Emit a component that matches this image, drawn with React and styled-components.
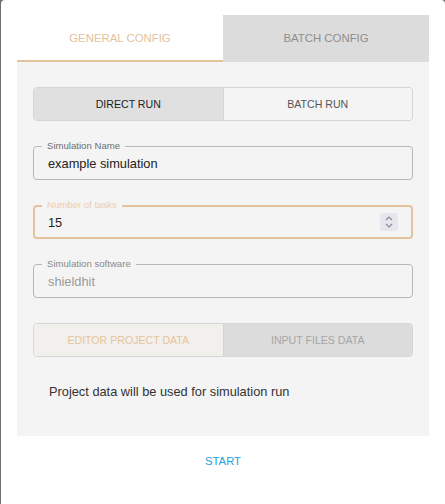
import styled, { createGlobalStyle } from 'styled-components';

const Global = createGlobalStyle`
	html, body {
		margin: 0;
		padding: 0;
		background: #6f6f6f;
		font-family: 'Liberation Sans', Arial, sans-serif;
	}
	* { box-sizing: border-box; }
`;

const Dialog = styled.div`
	margin-left: 1px;
	width: 444px;
	height: 504px;
	background: #fff;
	border-radius: 4px 4px 0 0;
	padding: 15px 16px 0 16px;
	display: flex;
	flex-direction: column;
`;

const Tabs = styled.div`
	display: flex;
	height: 47px;
`;

const Tab = styled.div`
	flex: 1;
	display: flex;
	align-items: center;
	justify-content: center;
	font-size: 11.4px;
	text-transform: uppercase;
	color: ${(p) => (p.active ? '#e3c39c' : '#8e8e8e')};
	background: ${(p) => (p.active ? '#fff' : '#dcdcdc')};
	border-bottom: 2px solid ${(p) => (p.active ? '#e3c39c' : '#dcdcdc')};
`;

const Panel = styled.div`
	background: #f4f4f4;
	height: 374px;
	padding: 25px 16px 0 16px;
	display: flex;
	flex-direction: column;
`;

const Toggle = styled.div`
	display: flex;
	height: 34px;
	border: 1px solid ${(p) => p.border || '#d4d4d4'};
	border-radius: 4px;
	overflow: hidden;
	margin-bottom: ${(p) => p.mb || 0}px;
`;

const ToggleItem = styled.div`
	flex: 1;
	display: flex;
	align-items: center;
	justify-content: center;
	font-size: 10.6px;
	text-transform: uppercase;
	color: ${(p) => p.color};
	background: ${(p) => p.bg};
	& + & {
		border-left: 1px solid ${(p) => p.sep || '#d4d4d4'};
	}
`;

const Field = styled.div`
	position: relative;
	height: 34px;
	border: ${(p) => (p.focused ? '2px solid #e3c39c' : '1px solid #b8b8b8')};
	border-radius: 4px;
	display: flex;
	align-items: center;
	padding-left: ${(p) => (p.focused ? 13 : 14)}px;
	padding-right: ${(p) => (p.focused ? 13 : 14)}px;
	margin-bottom: 25px;
	font-size: 12.8px;
	color: ${(p) => (p.disabled ? '#9a9a9a' : '#222')};
`;

const Label = styled.span`
	position: absolute;
	top: ${(p) => (p.focused ? -8 : -7)}px;
	left: ${(p) => (p.focused ? 7 : 8)}px;
	padding: 0 5px;
	background: #f4f4f4;
	font-size: 9.6px;
	line-height: 12px;
	color: ${(p) => p.color || '#6e6e6e'};
`;

const Value = styled.span`
	flex: 1;
`;

const Spinner = styled.div`
	width: 18px;
	height: 18px;
	background: #e6e6ec;
	border-radius: 2px;
	display: flex;
	align-items: center;
	justify-content: center;
`;

const Info = styled.p`
	margin: 27px 0 0 16px;
	font-size: 12.8px;
	color: #333;
`;

const Actions = styled.div`
	display: flex;
	justify-content: center;
	padding-top: 18px;
`;

const StartButton = styled.button`
	border: none;
	background: transparent;
	color: #2a9de0;
	font-family: inherit;
	font-size: 11.3px;
	text-transform: uppercase;
	cursor: pointer;
`;

export default function App() {
	return (
		<>
			<Global />
			<Dialog>
				<Tabs>
					<Tab active>General Config</Tab>
					<Tab>Batch Config</Tab>
				</Tabs>
				<Panel>
					<Toggle mb={25}>
						<ToggleItem bg='#e0e0e0' color='#222'>Direct Run</ToggleItem>
						<ToggleItem bg='#f4f4f4' color='#555'>Batch Run</ToggleItem>
					</Toggle>
					<Field>
						<Label>Simulation Name</Label>
						<Value>example simulation</Value>
					</Field>
					<Field focused>
						<Label focused color='#eacfae'>Number of tasks</Label>
						<Value>15</Value>
						<Spinner>
							<svg width='10' height='14' viewBox='0 0 10 14' fill='none' stroke='#8a8a9a' strokeWidth='1.2'>
								<path d='M2 5 L5 2 L8 5' />
								<path d='M2 9 L5 12 L8 9' />
							</svg>
						</Spinner>
					</Field>
					<Field disabled>
						<Label color='#8a8a8a'>Simulation software</Label>
						<Value>shieldhit</Value>
					</Field>
					<Toggle border='#d6d6d6'>
						<ToggleItem bg='#f2f0ec' color='#e6c49b' sep='#d6d6d6'>Editor Project Data</ToggleItem>
						<ToggleItem bg='#dcdcdc' color='#a6a6a6'>Input Files Data</ToggleItem>
					</Toggle>
					<Info>Project data will be used for simulation run</Info>
				</Panel>
				<Actions>
					<StartButton>Start</StartButton>
				</Actions>
			</Dialog>
		</>
	);
}
